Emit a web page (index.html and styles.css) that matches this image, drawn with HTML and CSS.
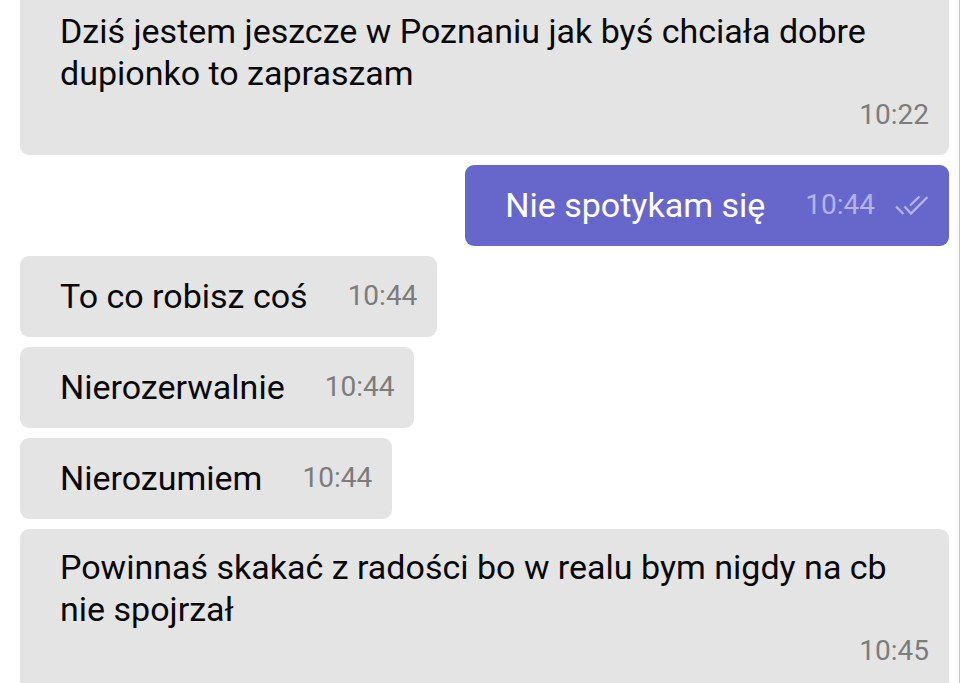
FILE: index.html
```html
<!DOCTYPE html>
<html lang="pl">
<head>
    <meta charset="UTF-8">
    <meta name="viewport" content="width=device-width, initial-scale=1.0">
    <title>Chat</title>
    <link rel="stylesheet" href="styles.css">
</head>
<body>
    <main class="chat">
        <div class="message long first">
            <p class="text">Dziś jestem jeszcze w Poznaniu jak byś chciała dobre dupionko to zapraszam</p>
            <time class="time">10:22</time>
        </div>
        <div class="message sent">
            <p class="text">Nie spotykam się</p>
            <time class="time">10:44</time>
            <svg class="ticks" viewBox="0 0 34 22" aria-hidden="true">
                <path d="M1 12.5l7.5 7.5M9.5 12.5l6.5 7L32.5 3M15 11.5L24.5 2.5"/>
            </svg>
        </div>
        <div class="message">
            <p class="text">To co robisz coś</p>
            <time class="time">10:44</time>
        </div>
        <div class="message">
            <p class="text">Nierozerwalnie</p>
            <time class="time">10:44</time>
        </div>
        <div class="message">
            <p class="text">Nierozumiem</p>
            <time class="time">10:44</time>
        </div>
        <div class="message long">
            <p class="text">Powinnaś skakać z radości bo w realu bym nigdy na cb nie spojrzał</p>
            <time class="time">10:45</time>
        </div>
    </main>
</body>
</html>
```
FILE: styles.css
```css
* {
    box-sizing: border-box;
}
body {
    font-family: Roboto, sans-serif;
    background-color: #fff;
    margin: 0;
    height: 100vh;
    overflow: hidden;
}
.chat {
    display: flex;
    flex-direction: column;
    align-items: flex-start;
    gap: 10px;
    min-height: 100vh;
    padding: 0 10px 0 20px;
    border-right: 1px solid #c6c6ce;
}
.message {
    display: flex;
    align-items: center;
    gap: 40px;
    padding: 19px 20px 20px 40px;
    border-radius: 9px;
    background-color: #e4e4e4;
    color: #080808;
}
.text {
    margin: 0;
    font-size: 34px;
    line-height: 42px;
}
.time {
    color: #7c7c7c;
    font-size: 28px;
    line-height: 42px;
}
.long {
    flex-direction: column;
    align-items: flex-end;
    gap: 0;
    width: 100%;
    padding-top: 17px;
}
.long .text {
    width: 100%;
}
.first {
    padding-top: 10px;
    padding-bottom: 19px;
    border-top-left-radius: 0;
    border-top-right-radius: 0;
}
.sent {
    align-self: flex-end;
    background-color: #6767cb;
    color: #fff;
}
.sent .time {
    color: #b3b3ee;
}
.ticks {
    width: 34px;
    height: 22px;
    margin-left: -20px;
    fill: none;
    stroke: #b3b3ee;
    stroke-width: 2.4;
}
```
